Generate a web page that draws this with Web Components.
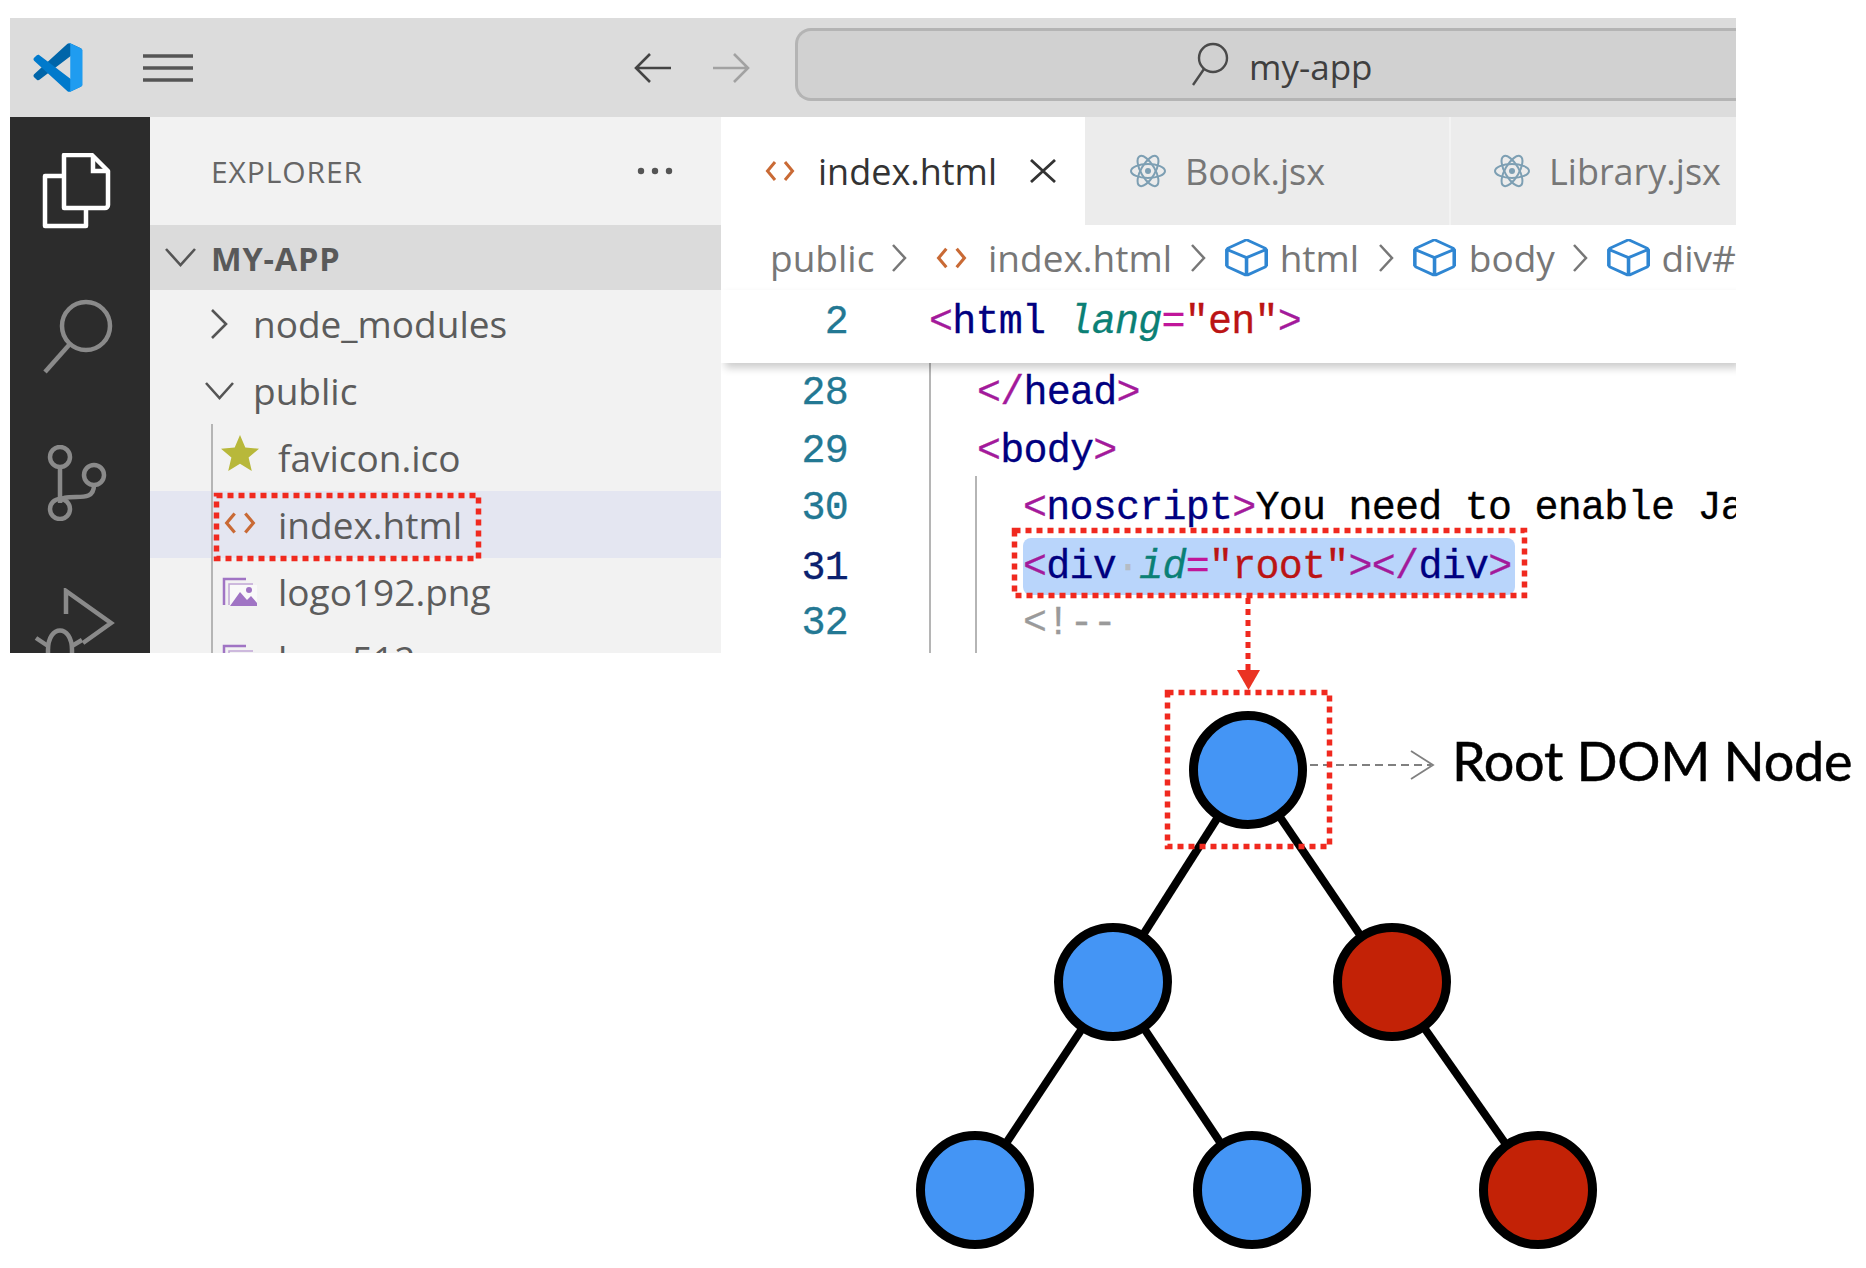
<!DOCTYPE html>
<html lang="en">
<head>
<meta charset="utf-8">
<title>Root DOM Node</title>
<style>
  body { margin: 0; background: #fff; }
</style>
</head>
<body>
<doc-page>
  <vs-window>
    <title-bar></title-bar>
    <activity-bar></activity-bar>
    <explorer-pane></explorer-pane>
    <editor-pane></editor-pane>
  </vs-window>
  <dom-tree></dom-tree>
  <call-outs></call-outs>
</doc-page>

<script>
const htmlIcon = (w, h) => `<svg width="${w}" height="${h}" viewBox="0 0 30 22" fill="none" stroke="#c96a35" stroke-width="3"><path d="M10 2 2.500 11 10 20M20 2l7.500 9L20 20"/></svg>`;
const reactIcon = `<svg width="38" height="36" viewBox="0 0 38 36" fill="none" stroke="#7d9fb3" stroke-width="2"><ellipse cx="19" cy="18" rx="17" ry="7"/><ellipse cx="19" cy="18" rx="17" ry="7" transform="rotate(60 19 18)"/><ellipse cx="19" cy="18" rx="17" ry="7" transform="rotate(120 19 18)"/><circle cx="19" cy="18" r="3" fill="#7d9fb3" stroke="none"/></svg>`;
const cubeIcon = `<svg width="43" height="38" viewBox="2 1 12 14" preserveAspectRatio="none" fill="#2f86d2"><path d="M13.51 4l-5-3h-1l-5 3-.49.86v6l.49.85 5 3h1l5-3 .49-.85v-6L13.51 4zm-6 9.56l-4.5-2.7V5.7l4.5 2.45v5.41zM3.27 4.7l4.74-2.84 4.74 2.84-4.74 2.59L3.27 4.7zm9.74 6.16l-4.5 2.7V8.15l4.5-2.45v5.16z"/></svg>`;
const crumbChevron = `<svg width="16" height="30" viewBox="0 0 16 30" fill="none" stroke="#777" stroke-width="2.500"><path d="M2 2l12 13L2 28"/></svg>`;
const UI_FONT = `"Open Sans", "Noto Sans", sans-serif`;

class DocPage extends HTMLElement {
  constructor() {
    super();
    this.attachShadow({ mode: "open" });
    this.shadowRoot.innerHTML = `
    <style>
      :host { display: block; position: relative; width: 1866px; height: 1268px; overflow: hidden; padding-top: 18px; box-sizing: border-box; }
    </style>
    <slot></slot>`;
  }
}

class VsWindow extends HTMLElement {
  constructor() {
    super();
    this.attachShadow({ mode: "open" });
    this.shadowRoot.innerHTML = `
    <style>
      :host {
        display: grid;
        grid-template-columns: 140px 571px 1015px;
        grid-template-rows: 99px 536px;
        width: 1726px;
        height: 635px;
        margin-left: 10px;
        overflow: hidden;
        font-family: ${UI_FONT};
      }
    </style>
    <slot></slot>`;
  }
}

class TitleBar extends HTMLElement {
  constructor() {
    super();
    this.attachShadow({ mode: "open" });
    this.shadowRoot.innerHTML = `
    <style>
      :host {
        grid-column: 1 / -1;
        display: flex;
        align-items: center;
        background: #dcdcdc;
        padding-left: 23px;
      }
      .logo { flex: none; }
      .menu { margin-left: 60px; flex: none; }
      .back { margin-left: 440px; flex: none; }
      .forward { margin-left: 42px; flex: none; }
      .command {
        flex: none;
        margin-left: 44px;
        width: 1000px;
        height: 73px;
        margin-top: -7px;
        box-sizing: border-box;
        background: #d1d1d1;
        border: 3px solid #b4b4b4;
        border-right: 0;
        border-radius: 16px 0 0 16px;
        display: flex;
        align-items: center;
        padding-left: 393px;
        gap: 20px;
        color: #3f3f3f;
        font-size: 35px;
      }
      .command span { position: relative; top: 2px; }
    </style>
    <svg class="logo" width="50" height="49" viewBox="0 0 100 100">
      <path fill="#0065A9" d="M96.4614 10.7962L75.8569 0.875542C73.4719 -0.272773 70.6217 0.211611 68.75 2.08333L1.29858 63.5832C-0.515693 65.2373 -0.513607 68.0937 1.30308 69.7452L6.81272 74.754C8.29793 76.1042 10.5347 76.2036 12.1338 74.9905L93.3609 13.3699C96.086 11.3026 100 13.2462 100 16.6667V16.4275C100 14.0265 98.6246 11.8378 96.4614 10.7962Z"/>
      <path fill="#007ACC" d="M96.4614 89.2038L75.8569 99.1245C73.4719 100.273 70.6217 99.7884 68.75 97.9167L1.29858 36.4168C-0.515693 34.7627 -0.513607 31.9063 1.30308 30.2548L6.81272 25.246C8.29793 23.8958 10.5347 23.7964 12.1338 25.0095L93.3609 86.6301C96.086 88.6974 100 86.7538 100 83.3333V83.5725C100 85.9735 98.6246 88.1622 96.4614 89.2038Z"/>
      <path fill="#1F9CF0" d="M75.8578 99.1263C73.4721 100.274 70.6219 99.7885 68.75 97.9166C71.0564 100.223 75 98.5895 75 95.3278V4.67213C75 1.41039 71.0564 -0.223106 68.75 2.08329C70.6219 0.211402 73.4721 -0.273666 75.8578 0.873633L96.4587 10.7807C98.6234 11.8217 100 14.0112 100 16.4132V83.5871C100 85.9891 98.6234 88.1786 96.4586 89.2196L75.8578 99.1263Z"/>
    </svg>
    <svg class="menu" width="50" height="28" viewBox="0 0 50 28" stroke="#555" stroke-width="3.500"><path d="M0 2h50M0 14h50M0 26h50"/></svg>
    <svg class="back" width="38" height="32" viewBox="0 0 38 32" fill="none" stroke="#444" stroke-width="2.600"><path d="M17 2 3 16l14 14M3 16h35"/></svg>
    <svg class="forward" width="38" height="32" viewBox="0 0 38 32" fill="none" stroke="#a2a2a2" stroke-width="2.600"><path d="M21 2l14 14-14 14M35 16H0"/></svg>
    <div class="command">
      <svg width="38" height="44" viewBox="0 0 38 44" fill="none" stroke="#4a4a4a" stroke-width="2.400"><circle cx="22" cy="16" r="14"/><path d="M13 27 2 43"/></svg>
      <span>my-app</span>
    </div>`;
  }
}

class ActivityBar extends HTMLElement {
  constructor() {
    super();
    this.attachShadow({ mode: "open" });
    this.shadowRoot.innerHTML = `
    <style>
      :host {
        display: flex;
        flex-direction: column;
        background: #2c2c2c;
        padding: 36px 0 0 32px;
        overflow: hidden;
      }
      svg { display: block; flex: none; }
      .search { margin: 70px 0 0 0; }
      .git { margin: 70px 0 0 2px; }
      .debug { margin: 67px 0 0 -14px; }
    </style>
    <svg width="70" height="76" viewBox="0 0 70 76" fill="none" stroke="#fff" stroke-width="4.500">
      <path d="M22 2h28l16 16v34a3 3 0 0 1-3 3H22z" stroke-linejoin="round"/>
      <path d="M51 4v14h14"/>
      <path d="M22 23H3v50h41V55" stroke-linejoin="round"/>
    </svg>
    <svg class="search" width="72" height="76" viewBox="0 0 72 76" fill="none" stroke="#8a8a8a" stroke-width="4.500"><circle cx="44" cy="27" r="24"/><path d="M27 46 3 73"/></svg>
    <svg class="git" width="66" height="76" viewBox="0 0 66 76" fill="none" stroke="#8a8a8a" stroke-width="4.500"><circle cx="16" cy="12" r="10"/><circle cx="16" cy="64" r="10"/><circle cx="50" cy="30" r="10"/><path d="M16 22v32M50 40c0 12-9 12-18 12-8 0-16 0-16 6"/></svg>
    <svg class="debug" width="90" height="72" viewBox="0 0 90 72" fill="none" stroke="#8a8a8a" stroke-width="4.500"><path d="M38 26V3l45 32-28 20"/><path d="M20 62c0-26 24-26 24 0v10H20zM20 58 8 50M44 58l10-6M20 68H4"/></svg>`;
  }
}

class TreeRow extends HTMLElement {
  constructor() {
    super();
    this.attachShadow({ mode: "open" });
    this.shadowRoot.innerHTML = `
    <style>
      :host {
        display: flex;
        align-items: center;
        height: 67px;
        flex: none;
        box-sizing: border-box;
        padding-left: var(--pad, 54px);
        color: #5c5c5c;
        font-size: 37px;
      }
      :host([selected]) { background: #e4e6f1; }
      .icon { flex: none; width: var(--icon, 30px); margin-right: 19px; display: grid; place-items: center; }
    </style>
    <span class="icon"><slot name="icon"></slot></span>
    <slot></slot>`;
  }
}

class ExplorerPane extends HTMLElement {
  constructor() {
    super();
    this.attachShadow({ mode: "open" });
    this.shadowRoot.innerHTML = `
    <style>
      :host { display: flex; flex-direction: column; background: #f2f2f2; overflow: hidden; position: relative; }
      header {
        flex: none;
        height: 108px;
        display: flex;
        align-items: center;
        justify-content: space-between;
        padding: 0 48px 0 61px;
        color: #666;
        font-size: 30px;
        letter-spacing: .9px;
      }
      .root {
        flex: none;
        height: 65px;
        background: #dbdbdb;
        display: flex;
        align-items: center;
        gap: 15px;
        padding-left: 15px;
        color: #595959;
        font-size: 32.500px;
        font-weight: 700;
        letter-spacing: .8px;
      }
      .root span { position: relative; top: 1px; }
      .files { display: flex; flex-direction: column; position: relative; --pad: 71px; --icon: 38px; }
      .files::before { content: ""; position: absolute; left: 61px; top: 0; bottom: 0; width: 2px; background: #b5b5b5; }
      .star { margin-top: -9px; }
      svg { display: block; }
    </style>
    <header>
      <span>EXPLORER</span>
      <svg width="36" height="8" viewBox="0 0 36 8" fill="#555"><circle cx="4" cy="4" r="3.200"/><circle cx="18" cy="4" r="3.200"/><circle cx="32" cy="4" r="3.200"/></svg>
    </header>
    <div class="root">
      <svg width="31" height="19" viewBox="0 0 31 19" fill="none" stroke="#555" stroke-width="2.600"><path d="M1 1l14.500 16L30 1"/></svg>
      <span>MY-APP</span>
    </div>
    <tree-row>
      <svg slot="icon" width="18" height="30" viewBox="0 0 18 30" fill="none" stroke="#555" stroke-width="2.600"><path d="M2 1l14 14L2 29"/></svg>
      node_modules
    </tree-row>
    <tree-row>
      <svg slot="icon" width="29" height="18" viewBox="0 0 29 18" fill="none" stroke="#555" stroke-width="2.600"><path d="M1 1l13.500 15L28 1"/></svg>
      public
    </tree-row>
    <div class="files">
      <tree-row>
        <svg class="star" slot="icon" width="38" height="36" viewBox="0 0 38 36" fill="#b8b83a"><path d="M19 0l5.300 12.600L38 13.700 27.600 22.500 30.800 36 19 28.800 7.200 36l3.200-13.500L0 13.700l13.700-1.100z"/></svg>
        favicon.ico
      </tree-row>
      <tree-row selected>
        ${htmlIcon(32, 26).replace("<svg", '<svg slot="icon" style="margin-top:-3px"')}
        index.html
      </tree-row>
      <tree-row>
        <svg slot="icon" width="36" height="30" viewBox="0 0 36 30" fill="none"><path d="M2 28V2h22" stroke="#a074c4" stroke-width="2.500"/><path d="M7 28V7h24" stroke="#a074c4" stroke-width="1.500" opacity=".6"/><path d="M8 29V8h27v21z" fill="#fff" opacity=".5"/><path d="M8 29l10-14 7 8 4-4 6 7v3z" fill="#a074c4"/><circle cx="27" cy="13" r="3" fill="#a074c4"/></svg>
        logo192.png
      </tree-row>
      <tree-row>
        <svg slot="icon" width="36" height="30" viewBox="0 0 36 30" fill="none"><path d="M2 28V2h22" stroke="#a074c4" stroke-width="2.500"/><path d="M7 28V7h24" stroke="#a074c4" stroke-width="1.500" opacity=".6"/><path d="M8 29l10-14 7 8 4-4 6 7v3z" fill="#a074c4"/><circle cx="27" cy="13" r="3" fill="#a074c4"/></svg>
        logo512.png
      </tree-row>
    </div>`;
  }
}

class EditorTab extends HTMLElement {
  constructor() {
    super();
    this.attachShadow({ mode: "open" });
    this.shadowRoot.innerHTML = `
    <style>
      :host {
        display: flex;
        align-items: center;
        flex: none;
        box-sizing: border-box;
        height: 108px;
        width: var(--w);
        padding-left: var(--pl);
        gap: 18px;
        background: #ececec;
        color: #777;
        font-size: 36px;
        border-right: 2px solid #f3f3f3;
      }
      :host([active]) { background: #fff; color: #333; gap: 23px; border-right: 0; }
    </style>
    <slot></slot>`;
  }
}

class CodeLine extends HTMLElement {
  constructor() {
    super();
    this.attachShadow({ mode: "open" });
    const num = this.getAttribute("num");
    this.shadowRoot.innerHTML = `
    <style>
      :host {
        display: grid;
        grid-template-columns: 127px 1fr;
        height: 57.500px;
        align-items: center;
        white-space: pre;
        color: #000;
      }
      .num { text-align: right; color: #237893; padding-top: 4px; }
      :host([current]) .num { color: #0b216f; }
      .code { padding: 4px 0 0 var(--indent, 81px); }
    </style>
    <span class="num">${num}</span>
    <span class="code"><slot></slot></span>`;
  }
}

class EditorPane extends HTMLElement {
  constructor() {
    super();
    this.attachShadow({ mode: "open" });
    this.shadowRoot.innerHTML = `
    <style>
      :host { display: flex; flex-direction: column; background: #fff; overflow: hidden; min-width: 0; }
      .tabs { display: flex; flex: none; }
      .crumbs {
        flex: none;
        height: 65px;
        display: flex;
        align-items: center;
        padding-left: 49px;
        color: #777;
        font-size: 37px;
        white-space: nowrap;
      }
      .crumbs svg { flex: none; }
      .code {
        font-family: "Liberation Mono", monospace;
        font-size: 40px;
        letter-spacing: -.75px;
        -webkit-text-stroke: .3px currentColor;
      }
      .sticky { flex: none; height: 73px; position: relative; z-index: 1; background: #fff; box-shadow: 4px 5px 8px rgba(0,0,0,.2); padding-top: 2px; box-sizing: border-box; }
      .body { flex: 1; position: relative; overflow: hidden; }
      .body::before { content: ""; position: absolute; left: 208px; top: 0; bottom: 0; width: 2px; background: #b5b5b5; }
      .body::after { content: ""; position: absolute; left: 254px; top: 113px; bottom: 0; width: 2px; background: #b5b5b5; }
      .t { color: #a31a9b; }
      .n { color: #000080; }
      .a { color: #0b8075; font-style: italic; }
      .e { color: #c0169a; }
      .s { color: #bb1414; }
      .c { color: #9a9a9a; }
      .ws { color: #b5bcc4; font-style: normal; }
      .hl { background: #b9d5fb; border-radius: 8px; display: inline-block; height: 57px; line-height: 60px; padding-right: 4px; position: relative; top: -2px; vertical-align: top; }
    </style>
    <div class="tabs">
      <editor-tab active style="--w:364px;--pl:44px">
        ${htmlIcon(30, 22)}
        <span>index.html</span>
        <svg style="margin-left:10px" width="26" height="24" viewBox="0 0 26 24" fill="none" stroke="#333" stroke-width="2.800"><path d="M1 1l24 22M25 1 1 23"/></svg>
      </editor-tab>
      <editor-tab style="--w:366px;--pl:44px">${reactIcon}<span>Book.jsx</span></editor-tab>
      <editor-tab style="--w:285px;--pl:42px;border-right:0">${reactIcon}<span>Library.jsx</span></editor-tab>
    </div>
    <div class="crumbs">
      <span>public</span><span style="width:17px"></span>${crumbChevron}<span style="width:29px"></span>
      ${htmlIcon(31, 24)}<span style="width:21px"></span>
      <span>index.html</span><span style="width:18px"></span>${crumbChevron}<span style="width:19px"></span>
      ${cubeIcon}<span style="width:12px"></span>
      <span>html</span><span style="width:19px"></span>${crumbChevron}<span style="width:19px"></span>
      ${cubeIcon}<span style="width:13px"></span>
      <span>body</span><span style="width:17px"></span>${crumbChevron}<span style="width:19px"></span>
      ${cubeIcon}<span style="width:12px"></span>
      <span>div#</span>
    </div>
    <div class="sticky code">
      <code-line num="2"><span class="t">&lt;</span><span class="n">html</span> <span class="a">lang</span><span class="e">=</span><span class="s">"en"</span><span class="t">&gt;</span></code-line>
    </div>
    <div class="body code">
      <code-line num="28" style="--indent:129px"><span class="t">&lt;/</span><span class="n">head</span><span class="t">&gt;</span></code-line>
      <code-line num="29" style="--indent:129px"><span class="t">&lt;</span><span class="n">body</span><span class="t">&gt;</span></code-line>
      <code-line num="30" style="--indent:175px"><span class="t">&lt;</span><span class="n">noscript</span><span class="t">&gt;</span>You need to enable JavaScript</code-line>
      <code-line num="31" current style="--indent:175px"><span class="hl"><span class="t">&lt;</span><span class="n">div</span><span class="ws">·</span><span class="a">id</span><span class="e">=</span><span class="s">"root"</span><span class="t">&gt;&lt;/</span><span class="n">div</span><span class="t">&gt;</span></span></code-line>
      <code-line num="32" style="--indent:175px"><span class="c">&lt;!--</span></code-line>
    </div>`;
  }
}

class DomTree extends HTMLElement {
  constructor() {
    super();
    this.attachShadow({ mode: "open" });
    const nodes = [
      [1248, 770, "#4495f5"], [1113, 982, "#4495f5"], [1392, 982, "#c32206"],
      [975, 1190, "#4495f5"], [1252, 1190, "#4495f5"], [1538, 1190, "#c32206"]
    ];
    const edges = [[0, 1], [0, 2], [1, 3], [1, 4], [2, 5]];
    const top = 653;
    const edgeMarkup = edges.map(([a, b]) =>
      `<line x1="${nodes[a][0]}" y1="${nodes[a][1] - top}" x2="${nodes[b][0]}" y2="${nodes[b][1] - top}"/>`).join("");
    const nodeMarkup = nodes.map(([x, y, fill]) =>
      `<circle cx="${x}" cy="${y - top}" r="54.500" fill="${fill}"/>`).join("");
    this.shadowRoot.innerHTML = `
    <style>
      :host { display: block; position: relative; width: 1866px; height: 615px; }
      svg { display: block; }
      .label {
        position: absolute;
        left: 1452px;
        top: 68px;
        font-family: Lato, "Open Sans", sans-serif;
        font-size: 54px;
        letter-spacing: -.3px;
        -webkit-text-stroke: .5px #000;
        line-height: 80px;
        color: #000;
        white-space: nowrap;
      }
    </style>
    <svg width="1866" height="615" fill="none" stroke="#000" stroke-width="9">
      <g stroke-width="8">${edgeMarkup}</g>
      ${nodeMarkup}
      <path d="M1310 ${765 - top}h121" stroke="#808080" stroke-width="1.800" stroke-dasharray="8 5"/>
      <path d="M1411 ${751 - top}l22 14-22 14" stroke="#808080" stroke-width="1.800"/>
    </svg>
    <span class="label">Root DOM Node</span>`;
  }
}

class CallOuts extends HTMLElement {
  constructor() {
    super();
    this.attachShadow({ mode: "open" });
    this.shadowRoot.innerHTML = `
    <style>
      :host { display: block; position: absolute; left: 0; top: 0; pointer-events: none; }
      svg { display: block; }
    </style>
    <svg width="1866" height="1268" fill="none" stroke="#f0291f" stroke-width="5.500" stroke-dasharray="6 5">
      <rect x="216.500" y="495.500" width="262" height="63"/>
      <rect x="1014.500" y="530.500" width="510" height="65"/>
      <rect x="1167.500" y="692.500" width="162" height="154"/>
      <path d="M1248 598v74" stroke-width="5"/>
      <path d="M1237 670h23l-11.500 20z" fill="#ea3323" stroke="none"/>
    </svg>`;
  }
}

customElements.define("doc-page", DocPage);
customElements.define("vs-window", VsWindow);
customElements.define("title-bar", TitleBar);
customElements.define("activity-bar", ActivityBar);
customElements.define("tree-row", TreeRow);
customElements.define("explorer-pane", ExplorerPane);
customElements.define("editor-tab", EditorTab);
customElements.define("code-line", CodeLine);
customElements.define("editor-pane", EditorPane);
customElements.define("dom-tree", DomTree);
customElements.define("call-outs", CallOuts);
</script>
</body>
</html>
